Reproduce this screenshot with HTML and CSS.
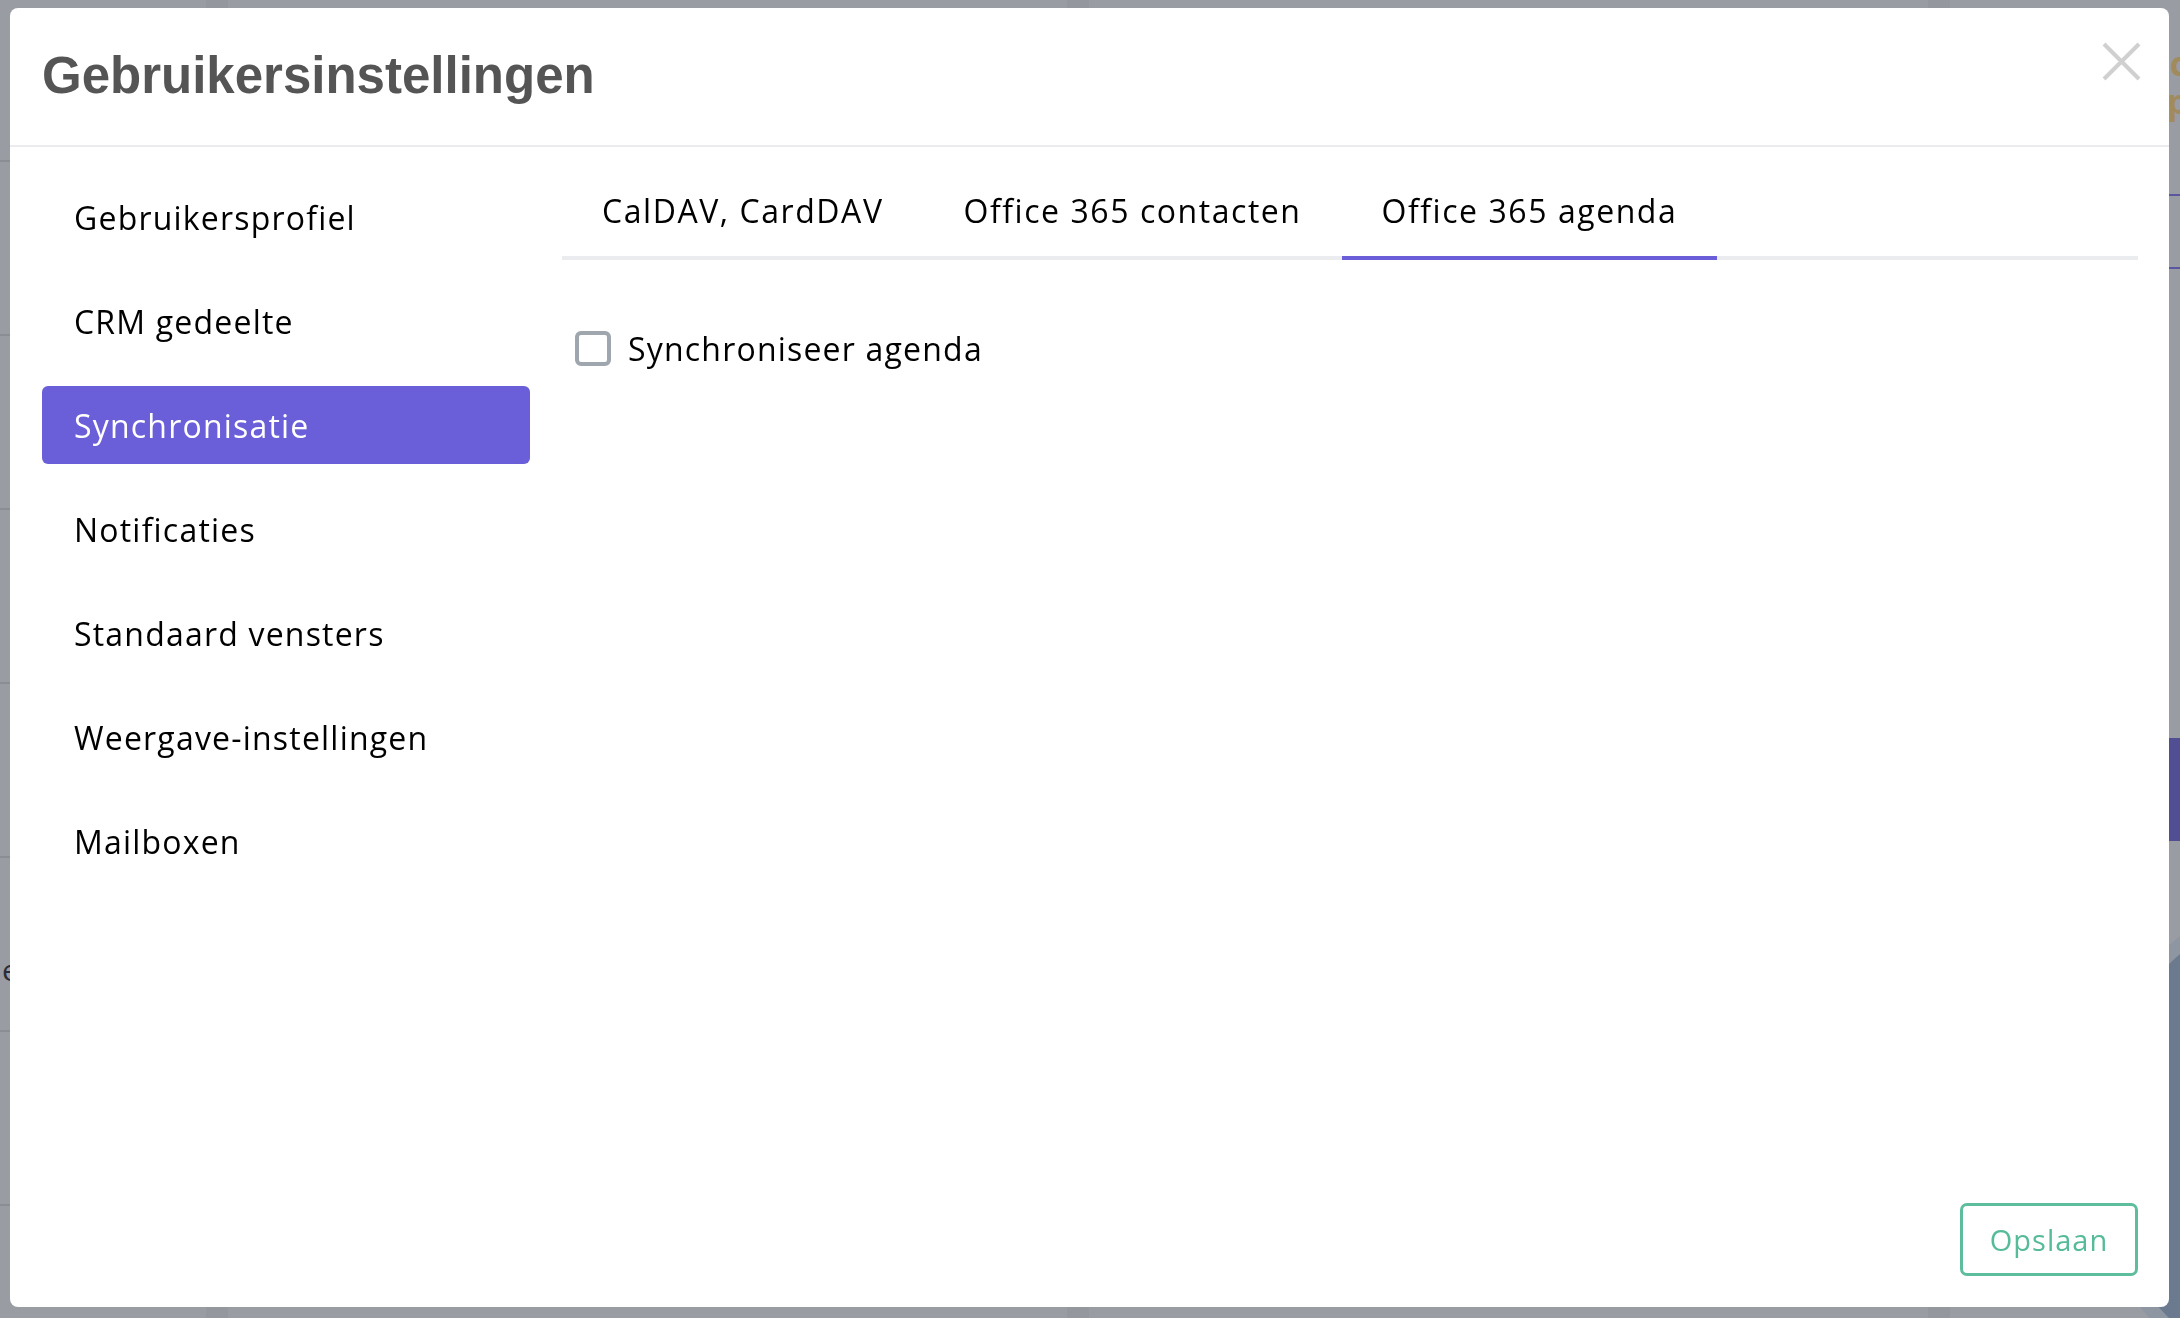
FILE: index.html
```html
<!DOCTYPE html>
<html lang="nl">
  <head>
    <meta charset="UTF-8" />
    <meta name="viewport" content="width=device-width, initial-scale=1.0" />
    <title>Gebruikersinstellingen</title>
    <link rel="stylesheet" href="styles.css">
  </head>
  <body>
    <!-- page behind the dialog, dimmed by the overlay -->
    <div class="page">
      <div class="page-nav">
        <div class="page-nav-head"></div>
        <div class="page-nav-row"></div>
        <div class="page-nav-row"></div>
        <div class="page-nav-row"></div>
        <div class="page-nav-row"></div>
        <div class="page-nav-row"><span class="page-nav-text">e</span></div>
        <div class="page-nav-row"></div>
      </div>
      <div class="page-gutter"></div>
      <div class="page-col"></div>
      <div class="page-gutter"></div>
      <div class="page-col"></div>
      <div class="page-gutter"></div>
      <div class="page-side">
        <div class="page-side-title">
          <div>Maandoverzicht</div>
          <div>Verkoopd</div>
        </div>
        <div class="page-side-tabs"></div>
        <div class="page-side-button"></div>
        <div class="page-side-art"></div>
      </div>
    </div>

    <div class="modal">
      <div class="modal-header">
        <h2 class="modal-title">Gebruikersinstellingen</h2>
        <button class="modal-close" aria-label="Sluiten">
          <svg width="39" height="39" viewBox="0 0 39 39">
            <path d="M2 2 L37 37 M37 2 L2 37" stroke="#d0d0d0" stroke-width="4" fill="none" />
          </svg>
        </button>
      </div>

      <div class="modal-body">
        <nav class="side-nav">
          <a class="side-nav-item">Gebruikersprofiel</a>
          <a class="side-nav-item">CRM gedeelte</a>
          <a class="side-nav-item active">Synchronisatie</a>
          <a class="side-nav-item">Notificaties</a>
          <a class="side-nav-item">Standaard vensters</a>
          <a class="side-nav-item">Weergave-instellingen</a>
          <a class="side-nav-item">Mailboxen</a>
        </nav>

        <div class="settings">
          <div class="tabs">
            <div class="tab">CalDAV, CardDAV</div>
            <div class="tab">Office 365 contacten</div>
            <div class="tab active">Office 365 agenda</div>
          </div>

          <div class="tab-pane">
            <label class="check">
              <span class="check-box"></span>
              <span class="check-label">Synchroniseer agenda</span>
            </label>
          </div>

          <div class="modal-footer">
            <button class="save-button">Opslaan</button>
          </div>
        </div>
      </div>
    </div>
  </body>
</html>
```

FILE: styles.css
```css
* {
  box-sizing: border-box;
}

body {
  margin: 0;
  height: 1318px;
  overflow: hidden;
  font-family: "Open Sans", sans-serif;
  background-color: #9a9ca3;
}

/* background page */
.page {
  display: flex;
  height: 1318px;
}

.page-nav {
  width: 206px;
}

.page-nav-head {
  height: 162px;
  border-bottom: 2px solid #8b8d94;
}

.page-nav-row {
  height: 174px;
  border-bottom: 2px solid #8b8d94;
  display: flex;
  align-items: center;
  padding-top: 50px;
}

.page-nav-text {
  margin-left: 2px;
  font-size: 30px;
  color: #2b2e36;
}

.page-gutter {
  width: 22px;
  background-color: #95979f;
}

.page-col {
  flex: 1;
}

.page-side {
  width: 230px;
  display: flex;
  flex-direction: column;
  overflow: hidden;
}

.page-side > div {
  flex-shrink: 0;
}

.page-side-title {
  padding-top: 44px;
  height: 196px;
  text-align: right;
  margin-right: -30px;
  font-size: 34px;
  font-weight: bold;
  line-height: 38px;
  color: #a18b5c;
  white-space: nowrap;
  border-bottom: 2px solid #5a56a0;
}

.page-side-tabs {
  height: 73px;
  border-bottom: 2px solid #5a56a0;
}

.page-side-button {
  margin-top: 469px;
  height: 103px;
  background-color: #514e93;
}

.page-side-art {
  margin-top: 40px;
  margin-left: 130px;
  width: 520px;
  height: 520px;
  border-radius: 50%;
  background-color: #6b7a8e;
  border: 14px solid #8e96a2;
}

/* dialog */
.modal {
  position: fixed;
  left: 10px;
  top: 8px;
  width: 2159px;
  height: 1299px;
  background: white;
  border-radius: 8px;
  display: flex;
  flex-direction: column;
}

.modal-header {
  height: 139px;
  border-bottom: 2px solid #ebebf0;
  display: flex;
  align-items: flex-start;
  justify-content: space-between;
  padding: 0 28px 0 32px;
}

.modal-title {
  margin: 43px 0 0;
  font-family: "Liberation Sans", Arial, sans-serif;
  font-size: 51px;
  line-height: 50px;
  font-weight: bold;
  color: #555;
}

.modal-close {
  margin-top: 34px;
  padding: 0;
  border: none;
  background: none;
  width: 39px;
  height: 39px;
  cursor: pointer;
}

.modal-close svg {
  display: block;
}

.modal-body {
  flex: 1;
  display: flex;
  gap: 32px;
  padding: 31px 31px 31px 32px;
}

.side-nav {
  width: 488px;
  display: flex;
  flex-direction: column;
  gap: 26px;
}

.side-nav-item {
  height: 78px;
  padding-left: 32px;
  display: flex;
  align-items: center;
  font-size: 32px;
  letter-spacing: 1.2px;
  color: #000;
  border-radius: 6px;
  cursor: pointer;
}

.side-nav-item.active {
  background-color: #6a5fd8;
  color: white;
}

.settings {
  flex: 1;
  display: flex;
  flex-direction: column;
}

.tabs {
  display: flex;
  border-bottom: 4px solid #ebecef;
}

.tab {
  height: 82px;
  padding: 0 40px 14px;
  margin-bottom: -4px;
  display: flex;
  align-items: center;
  font-size: 32px;
  letter-spacing: 1.55px;
  color: #000;
  border-bottom: 4px solid transparent;
  cursor: pointer;
}

.tab.active {
  border-bottom-color: #6a5fd8;
}

.tab-pane {
  padding: 67px 0 0 13px;
}

.check {
  display: flex;
  align-items: center;
  gap: 17px;
  cursor: pointer;
}

.check-box {
  width: 36px;
  height: 35px;
  border: 4px solid #a0a6ad;
  border-radius: 6px;
}

.check-label {
  font-size: 32px;
  letter-spacing: 1.2px;
  color: #000;
}

.modal-footer {
  margin-top: auto;
  display: flex;
  justify-content: flex-end;
}

.save-button {
  width: 178px;
  height: 73px;
  background: white;
  border: 3px solid #5dbd9c;
  border-radius: 7px;
  color: #55bb98;
  font-family: "Open Sans", sans-serif;
  font-size: 29px;
  letter-spacing: 1px;
  cursor: pointer;
}
```
